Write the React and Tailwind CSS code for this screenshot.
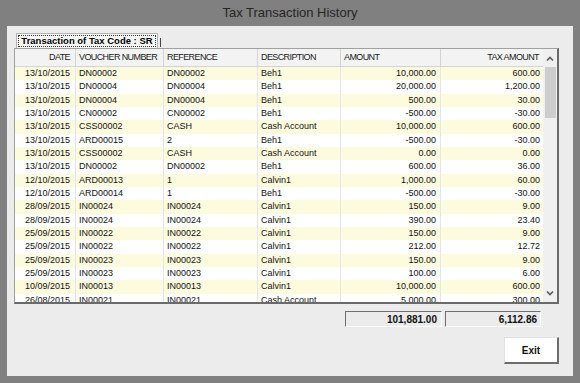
import React from "react";

const rows = [
  ["13/10/2015", "DN00002", "DN00002", "Beh1", "10,000.00", "600.00"],
  ["13/10/2015", "DN00004", "DN00004", "Beh1", "20,000.00", "1,200.00"],
  ["13/10/2015", "DN00004", "DN00004", "Beh1", "500.00", "30.00"],
  ["13/10/2015", "CN00002", "CN00002", "Beh1", "-500.00", "-30.00"],
  ["13/10/2015", "CSS00002", "CASH", "Cash Account", "10,000.00", "600.00"],
  ["13/10/2015", "ARD00015", "2", "Beh1", "-500.00", "-30.00"],
  ["13/10/2015", "CSS00002", "CASH", "Cash Account", "0.00", "0.00"],
  ["13/10/2015", "DN00002", "DN00002", "Beh1", "600.00", "36.00"],
  ["12/10/2015", "ARD00013", "1", "Calvin1", "1,000.00", "60.00"],
  ["12/10/2015", "ARD00014", "1", "Beh1", "-500.00", "-30.00"],
  ["28/09/2015", "IN00024", "IN00024", "Calvin1", "150.00", "9.00"],
  ["28/09/2015", "IN00024", "IN00024", "Calvin1", "390.00", "23.40"],
  ["25/09/2015", "IN00022", "IN00022", "Calvin1", "150.00", "9.00"],
  ["25/09/2015", "IN00022", "IN00022", "Calvin1", "212.00", "12.72"],
  ["25/09/2015", "IN00023", "IN00023", "Calvin1", "150.00", "9.00"],
  ["25/09/2015", "IN00023", "IN00023", "Calvin1", "100.00", "6.00"],
  ["10/09/2015", "IN00013", "IN00013", "Calvin1", "10,000.00", "600.00"],
  ["26/08/2015", "IN00021", "IN00021", "Cash Account", "5,000.00", "300.00"],
];

const font = { fontFamily: '"Liberation Sans", Arial, sans-serif' };

const Chevron = ({ up }) => (
  <svg width="8" height="5" viewBox="0 0 8 5">
    <path
      d={up ? "M1 4.5 L4 1.5 L7 4.5" : "M1 0.5 L4 3.5 L7 0.5"}
      fill="none"
      stroke="#5a5a5a"
      strokeWidth="1.6"
    />
  </svg>
);

const App = () => {
  return (
    <div
      className="w-[580px] h-[383px] bg-[#808080] flex flex-col overflow-hidden"
      style={font}
    >
      {/* title bar */}
      <div className="h-[26px] flex items-center justify-center text-[13px] text-[#262626]">
        Tax Transaction History
      </div>

      {/* client area */}
      <div className="mx-[7px] h-[350px] bg-[#ececec] flex flex-col">
        {/* tab */}
        <div className="h-[22px] flex items-end pl-[9px]">
          <div className="h-[15px] w-[142px] bg-[#f7f7f7] border-t border-l border-r border-[#b5b5b5] flex items-stretch p-[1px]">
            <div className="flex-1 border border-dotted border-[#333] flex items-center justify-center text-[9.5px] font-bold text-black leading-none">
              Transaction of Tax Code : SR
            </div>
          </div>
          <div className="w-[1px] h-[9px] bg-[#444] ml-[2px] mb-[1px]" />
        </div>

        {/* grid */}
        <div className="ml-[7px] w-[545px] h-[256px] border-t border-l border-[#a0a0a0] border-r-2 border-b-2 border-r-[#6a6a6a] border-b-[#6a6a6a] flex bg-white">
          <div className="w-[528px] flex flex-col overflow-hidden">
            <div className="h-[18px] shrink-0 flex bg-[#f3f3f3] border-b border-[#d4d4d4] text-[9px] tracking-[-0.6px] text-[#1a1a1a]">
              <div className="w-[61px] border-r border-[#d4d4d4] flex items-center justify-end pr-[5px]">DATE</div>
              <div className="w-[88px] border-r border-[#d4d4d4] flex items-center pl-[3px]">VOUCHER NUMBER</div>
              <div className="w-[94px] border-r border-[#d4d4d4] flex items-center pl-[3px]">REFERENCE</div>
              <div className="w-[83px] border-r border-[#d4d4d4] flex items-center pl-[3px]">DESCRIPTION</div>
              <div className="w-[100px] border-r border-[#d4d4d4] flex items-center pl-[3px]">AMOUNT</div>
              <div className="w-[102px] flex items-center justify-end pr-[4px]">TAX AMOUNT</div>
            </div>
            <div className="flex-1 overflow-hidden">
              {rows.map((r, i) => (
                <div
                  key={i}
                  className={`h-[13.33px] flex text-[9px] leading-[12.5px] text-[#111] ${
                    i % 2 === 0 ? "bg-[#fdfbdd]" : "bg-white"
                  }`}
                >
                  <div className="w-[61px] border-r border-[#e6e6e6] text-right pr-[5px]">{r[0]}</div>
                  <div className="w-[88px] border-r border-[#e6e6e6] pl-[3px]">{r[1]}</div>
                  <div className="w-[94px] border-r border-[#e6e6e6] pl-[3px]">{r[2]}</div>
                  <div className="w-[83px] border-r border-[#e6e6e6] pl-[3px]">{r[3]}</div>
                  <div className="w-[100px] border-r border-[#e6e6e6] text-right pr-[4px]">{r[4]}</div>
                  <div className="w-[102px] text-right pr-[3px]">{r[5]}</div>
                </div>
              ))}
            </div>
          </div>

          {/* scrollbar */}
          <div className="w-[14px] flex flex-col bg-[#f0f0f0]">
            <div className="h-[18px] flex items-center justify-center">
              <Chevron up />
            </div>
            <div className="flex-1 pl-[2px] pr-[1px]">
              <div className="h-[51px] bg-[#cdcdcd]" />
            </div>
            <div className="h-[17px] flex items-center justify-center">
              <Chevron />
            </div>
          </div>
        </div>

        {/* totals */}
        <div className="mt-[7px] h-[16px] flex pl-[338px] gap-[3px]">
          <div className="w-[97px] border-t border-l border-[#6f6f6f] border-b border-r border-b-white border-r-white bg-[#ebebeb] flex items-center justify-end pr-[4px] text-[10px] font-bold text-[#111]">
            101,881.00
          </div>
          <div className="w-[96px] border-t border-l border-[#6f6f6f] border-b border-r border-b-white border-r-white bg-[#ebebeb] flex items-center justify-end pr-[3px] text-[10px] font-bold text-[#111]">
            6,112.86
          </div>
        </div>

        {/* exit */}
        <div className="mt-[10px] flex justify-end pr-[14px]">
          <button className="w-[55px] h-[27px] bg-white border-t border-l border-[#e3e3e3] border-r-2 border-b-2 border-r-[#6d6d6d] border-b-[#6d6d6d] text-[10px] font-bold text-[#111] flex items-center justify-center">
            Exit
          </button>
        </div>
      </div>
    </div>
  );
};

export default App;
